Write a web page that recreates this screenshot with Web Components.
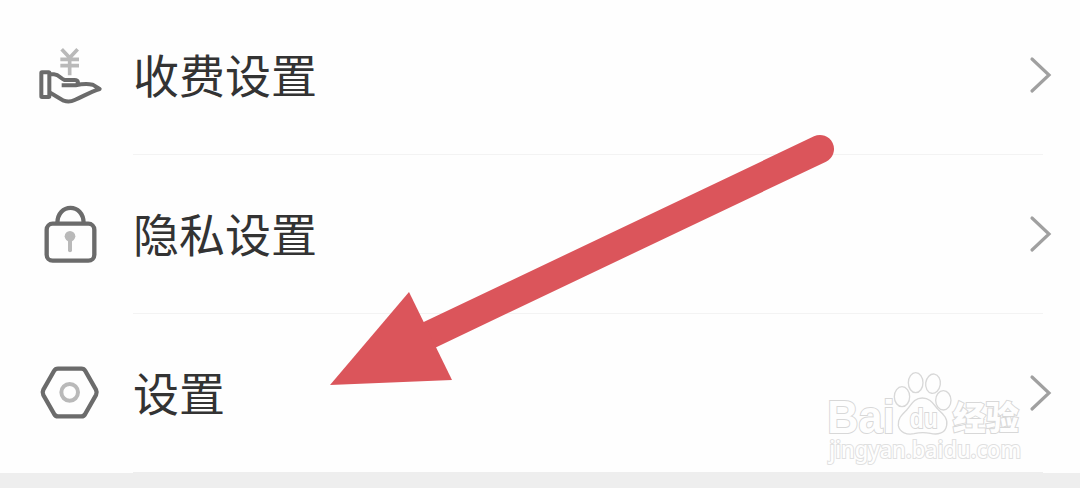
<!DOCTYPE html>
<html lang="zh-CN">
<head>
<meta charset="utf-8">
<title>设置</title>
<style>
    body {
        margin: 0;
        height: 488px;
        overflow: hidden;
        background: #eee;
        font-family: "Noto Sans CJK SC", sans-serif;
    }
</style>
</head>
<body>
<settings-page>
    <settings-row>
        <svg slot="icon" width="80" height="70" viewBox="0 0 240 210" fill="none" stroke-linejoin="round">
            <g stroke="#b9b9b9" stroke-width="11">
                <path d="M95 28L119 53L143 28M119 52V106M91 58H147M91 77H147"/>
            </g>
            <g stroke="#6b6b6b" stroke-width="12">
                <rect x="34" y="97" width="24" height="74" rx="2"/>
                <path d="M58 103H72C88 104 92 116 104 120H134C145 120 148 132 137 136H95M137 136C155 132 172 131 188 134L209 147C180 156 158 170 134 180C122 186 112 186 101 182C86 174 73 165 58 157"/>
            </g>
        </svg>
        收费设置
    </settings-row>
    <settings-row>
        <svg slot="icon" width="80" height="70" viewBox="0 -3 240 210" fill="none">
            <g stroke="#6b6b6b" stroke-width="13">
                <rect x="50" y="71" width="143" height="111" rx="18"/>
                <path d="M82 70C82 8 161 8 161 70"/>
            </g>
            <circle cx="120" cy="109" r="16" fill="#b9b9b9"/>
            <path d="M120 109V151" stroke="#b9b9b9" stroke-width="12" stroke-linecap="round"/>
        </svg>
        隐私设置
    </settings-row>
    <settings-row last>
        <svg slot="icon" width="80" height="70" viewBox="0 9 240 210" fill="none">
            <path d="M84 41H154Q162 41 166 48L198 104Q202 112 198 120L166 176Q162 184 154 184H84Q76 184 72 176L40 120Q36 112 40 104L72 48Q76 41 84 41Z" stroke="#6b6b6b" stroke-width="13"/>
            <circle cx="119" cy="112" r="25" stroke="#b9b9b9" stroke-width="12"/>
        </svg>
        设置
    </settings-row>
    <pointer-arrow slot="overlay"></pointer-arrow>
    <site-watermark slot="overlay"></site-watermark>
</settings-page>

<script>
class SettingsPage extends HTMLElement {
    constructor() {
        super();
        this.attachShadow({ mode: "open" })
            .innerHTML = /*html*/ `
            <style>
                :host {
                    display: block;
                    position: relative;
                    height: 488px;
                    overflow: hidden;
                }
                main {
                    display: flex;
                    flex-direction: column;
                    margin-top: -4px;
                    background: #fefefe;
                }
            </style>
            <main><slot></slot></main>
            <slot name="overlay"></slot>
        `;
    }
}

class SettingsRow extends HTMLElement {
    constructor() {
        super();
        this.attachShadow({ mode: "open" })
            .innerHTML = /*html*/ `
            <style>
                :host {
                    display: flex;
                    height: 159px;
                    padding: 0 37px 0 30px;
                    box-sizing: border-box;
                    color: #333;
                    font-size: 46px;
                    line-height: 66px;
                }
                .icon {
                    display: flex;
                    align-items: center;
                    width: 103px;
                    height: 158px;
                }
                .content {
                    flex: 1;
                    display: flex;
                    align-items: center;
                    justify-content: space-between;
                    border-bottom: 1px solid #f3f3f3;
                }
                :host([last]) .content {
                    border-color: #eee;
                }
                .label {
                    padding-bottom: 5px;
                }
                .chevron {
                    margin-right: -12px;
                }
            </style>
            <div class="icon"><slot name="icon"></slot></div>
            <div class="content">
                <div class="label"><slot></slot></div>
                <svg class="chevron" width="26" height="40" viewBox="0 0 26 40" fill="none"
                    stroke="#a0a0a0" stroke-width="3.2" stroke-linecap="round">
                    <path d="M3 4L20 20L3 36"/>
                </svg>
            </div>
        `;
    }
}

class PointerArrow extends HTMLElement {
    constructor() {
        super();
        this.attachShadow({ mode: "open" })
            .innerHTML = /*html*/ `
            <style>
                :host {
                    position: absolute;
                    inset: 0;
                    pointer-events: none;
                }
            </style>
            <svg width="1080" height="488" viewBox="0 0 1080 488">
                <path d="M820 149L425 337" stroke="#db555b" stroke-width="28" stroke-linecap="round"/>
                <path d="M330 385L409 292L452 380Z" fill="#db555b"/>
            </svg>
        `;
    }
}

class SiteWatermark extends HTMLElement {
    constructor() {
        super();
        this.attachShadow({ mode: "open" })
            .innerHTML = /*html*/ `
            <style>
                :host {
                    position: absolute;
                    left: 820px;
                    top: 365px;
                    pointer-events: none;
                }
                svg {
                    display: block;
                }
                text {
                    font-family: "Liberation Sans", sans-serif;
                    font-weight: bold;
                    paint-order: stroke;
                }
                .cn {
                    font-family: "Noto Sans CJK SC", sans-serif;
                    font-weight: 900;
                }
                .url {
                    font-family: "Noto Sans", sans-serif;
                    font-weight: 500;
                }
            </style>
            <svg width="240" height="110" viewBox="0 0 720 330" fill="#fefefe" stroke="#d8d8d8" stroke-width="6">
                <text x="22" y="204" font-size="137" textLength="202" lengthAdjust="spacingAndGlyphs">Bai</text>
                <g stroke-width="4">
                    <ellipse cx="246" cy="95" rx="23" ry="30"/>
                    <ellipse cx="287" cy="53" rx="22" ry="30"/>
                    <ellipse cx="339" cy="56" rx="22" ry="29" transform="rotate(8 339 56)"/>
                    <ellipse cx="370" cy="106" rx="23" ry="29"/>
                    <path d="M307 99C332 99 341 119 355 134C372 149 384 162 380 181C376 207 350 210 331 205C314 202 300 202 282 206C261 210 239 203 235 182C232 161 246 149 260 135C274 119 282 99 307 99Z"/>
                </g>
                <text x="269" y="190" font-size="85" textLength="84" lengthAdjust="spacingAndGlyphs">du</text>
                <text class="cn" x="398" y="194" font-size="100" textLength="198" lengthAdjust="spacingAndGlyphs">经验</text>
                <text class="url" x="28" y="280" font-size="68" textLength="575" lengthAdjust="spacingAndGlyphs" stroke="#e0e0e0">jingyan.baidu.com</text>
            </svg>
        `;
    }
}

customElements.define('settings-page', SettingsPage);
customElements.define('settings-row', SettingsRow);
customElements.define('pointer-arrow', PointerArrow);
customElements.define('site-watermark', SiteWatermark);
</script>
</body>
</html>
